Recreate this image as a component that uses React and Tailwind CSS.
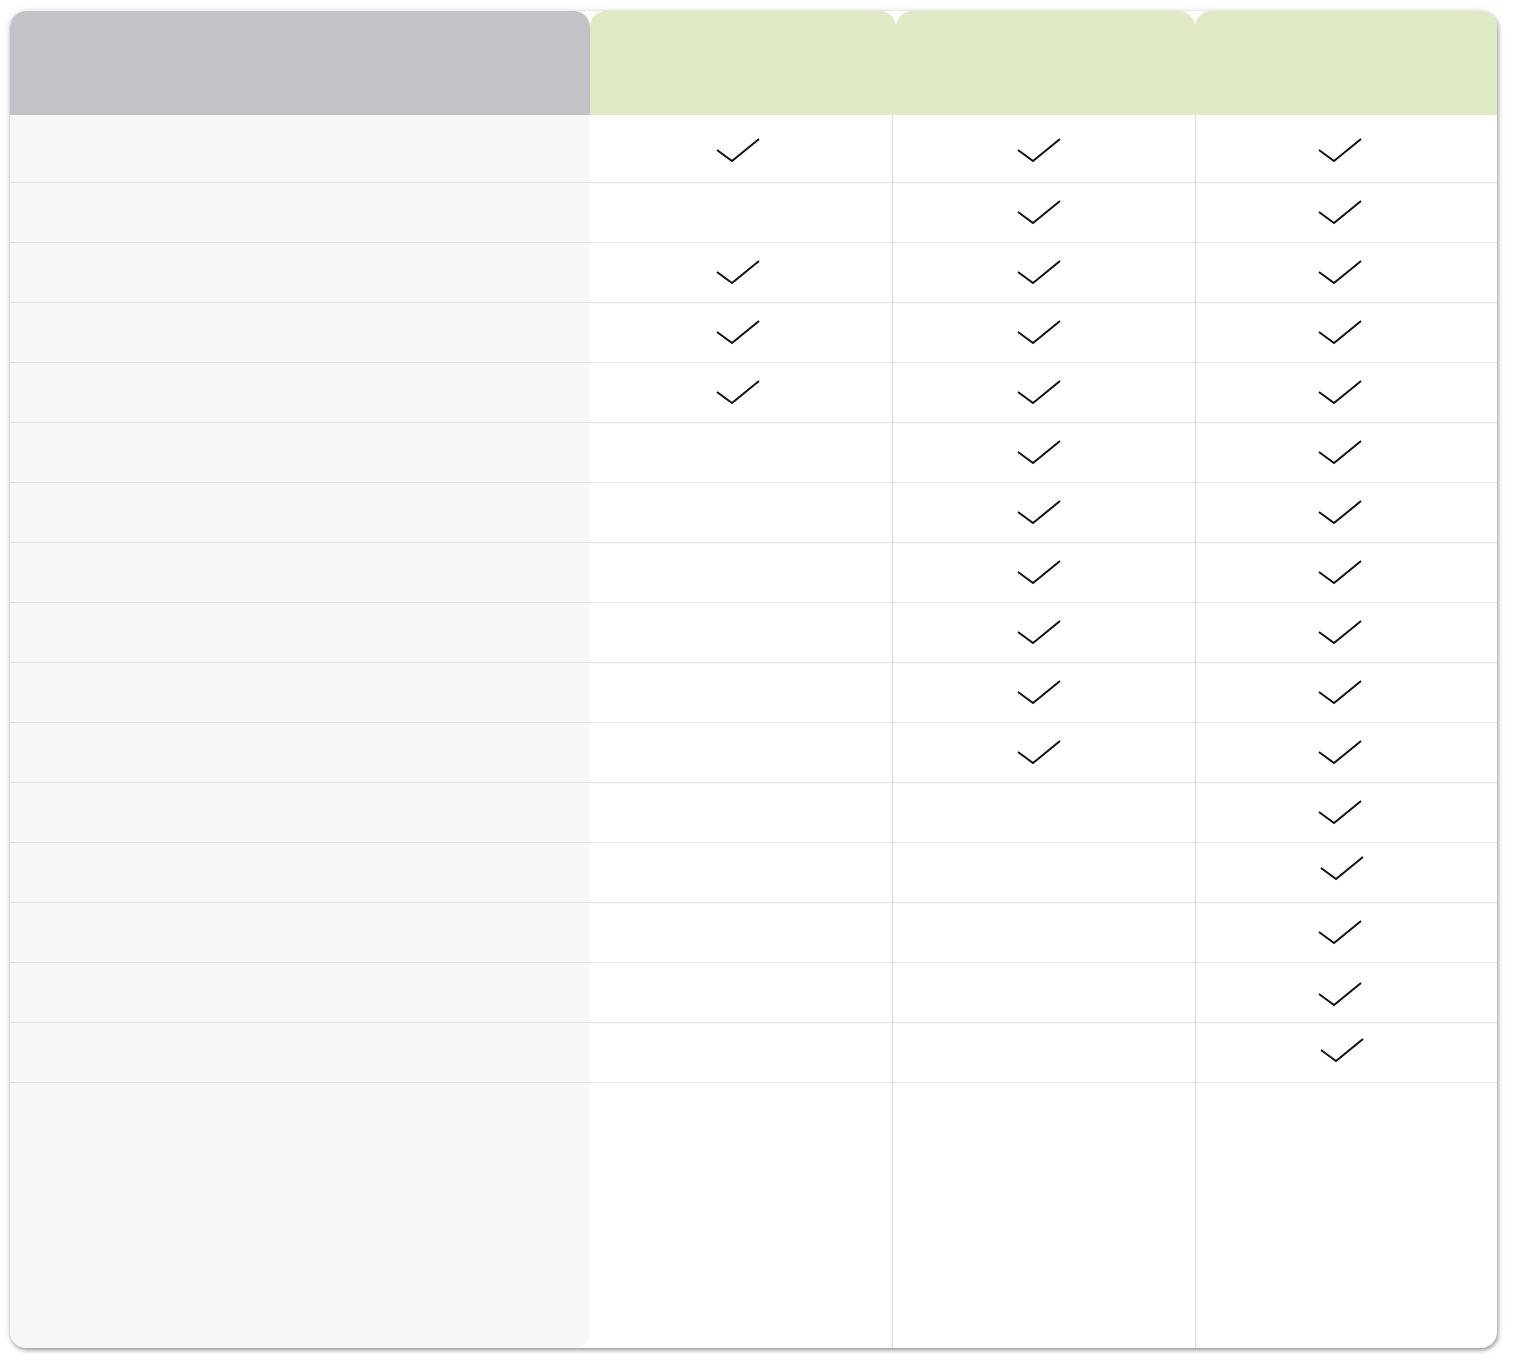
import React from "react";

const CHECKS = [
  [1, 1, 1],
  [0, 1, 1],
  [1, 1, 1],
  [1, 1, 1],
  [1, 1, 1],
  [0, 1, 1],
  [0, 1, 1],
  [0, 1, 1],
  [0, 1, 1],
  [0, 1, 1],
  [0, 1, 1],
  [0, 0, 1],
  [0, 0, 1],
  [0, 0, 1],
  [0, 0, 1],
  [0, 0, 1],
];

const OFFSETS = {
  "12-2": "translate-x-[2px] -translate-y-[4px]",
  "14-2": "translate-y-[2px]",
  "15-2": "translate-x-[2px] -translate-y-[2px]",
};

const PADS = ["pr-[6px]", "pr-[10px]", "pr-[12px]"];

const HEADERS = ["w-[calc(100%+4px)]", "ml-[4px]", ""];

function Check({ className }) {
  return (
    <svg
      className={className}
      width="44"
      height="25"
      viewBox="0 0 44 25"
      fill="none"
    >
      <polyline
        points="1,12 16,23 43,1"
        stroke="#111"
        strokeWidth="2"
        strokeLinecap="butt"
        strokeLinejoin="miter"
      />
    </svg>
  );
}

function PlanColumn({ idx, divider }) {
  return (
    <div className="flex flex-col flex-1 min-w-0">
      <div
        className={
          "h-[104px] shrink-0 bg-[#dfeac4] rounded-t-[16px] " + HEADERS[idx]
        }
      />
      <div
        className={
          "flex flex-col flex-1 " + (divider ? "border-l border-[#d9d9d9]" : "")
        }
      >
        {CHECKS.map((row, i) => (
          <div
            key={i}
            className={
              (i === 0 ? "h-[68px] pt-[4px]" : "h-[60px]") +
              " shrink-0 border-b border-[#e2e2e2] flex items-center justify-center " +
              PADS[idx]
            }
          >
            {row[idx] ? <Check className={OFFSETS[i + "-" + idx] || ""} /> : null}
          </div>
        ))}
        <div className="flex-1" />
      </div>
    </div>
  );
}

export default function App() {
  return (
    <div className="min-h-[1368px] bg-white pt-[11px] pl-[10px]">
      <div className="w-[1487px] h-[1337px] flex bg-white rounded-[16px] overflow-hidden shadow-[1px_2px_4px_rgba(0,0,0,0.4),0_0_10px_rgba(0,0,0,0.08)]">
        <div className="w-[580px] shrink-0 flex flex-col bg-[#f7f7f7] rounded-[16px] overflow-hidden">
          <div className="h-[104px] shrink-0 bg-[#c3c2c7]" />
          {CHECKS.map((_, i) => (
            <div
              key={i}
              className={
                (i === 0 ? "h-[68px]" : "h-[60px]") +
                " shrink-0 border-b border-[#e2e2e2]"
              }
            />
          ))}
          <div className="flex-1" />
        </div>
        <PlanColumn idx={0} divider={false} />
        <PlanColumn idx={1} divider={true} />
        <PlanColumn idx={2} divider={true} />
      </div>
    </div>
  );
}
